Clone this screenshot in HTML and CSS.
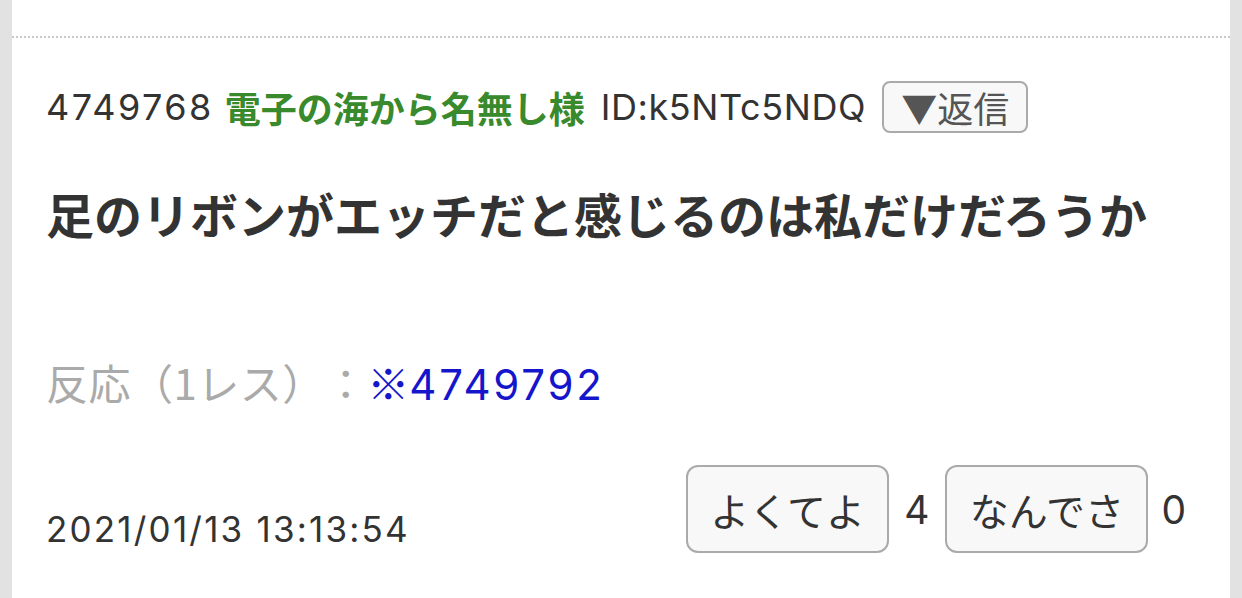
FILE: index.html
```html
<!DOCTYPE html>
<html lang="ja">
<head>
    <meta charset="UTF-8">
    <meta name="viewport" content="width=device-width, initial-scale=1.0">
    <title>4749768</title>
    <link rel="stylesheet" href="styles.css">
</head>
<body>
    <div class="thread">
        <div class="post">
            <div class="meta">
                <span class="num">4749768</span>
                <span class="name">電子の海から名無し様</span>
                <span class="uid">ID:k5NTc5NDQ</span>
                <button class="reply-button">▼返信</button>
            </div>

            <div class="body">足のリボンがエッチだと感じるのは私だけだろうか</div>

            <div class="reaction">
                <span class="label">反応（1レス）：</span><a class="res-link" href="#"><span class="mark">※</span>4749792</a>
            </div>

            <div class="footer">
                <div class="date">2021/01/13 13:13:54</div>
                <div class="votes">
                    <button class="vote-button">よくてよ</button>
                    <span class="count">4</span>
                    <button class="vote-button">なんでさ</button>
                    <span class="count last">0</span>
                </div>
            </div>
        </div>
    </div>
</body>
</html>
```

FILE: styles.css
```css
html, body {
    margin: 0;
    padding: 0;
}
body {
    font-family: "Inter", "Noto Sans CJK JP", sans-serif;
    background-color: #e2e2e2;
    color: #333;
    height: 598px;
    overflow: hidden;
    text-spacing-trim: space-all;
}
.thread {
    background-color: #fff;
    margin: 0 12px;
    padding-top: 36px;
    height: 598px;
    box-sizing: border-box;
}
.post {
    border-top: 2px dotted #c8c8c8;
    border-bottom: 1px dashed #cfcfcf;
    padding: 0 44px 45px 34px;
}
.meta {
    display: flex;
    align-items: center;
    height: 52px;
    margin-top: 43px;
    font-size: 36px;
}
.num {
    letter-spacing: 2.4px;
    margin-right: 11px;
}
.name {
    font-family: "Noto Sans CJK JP", sans-serif;
    font-weight: 700;
    color: #388a2c;
    margin-right: 16px;
}
.uid {
    letter-spacing: 0.6px;
    margin-right: 16px;
}
.reply-button {
    font-family: "Noto Sans CJK JP", sans-serif;
    font-size: 36px;
    color: #555;
    background-color: #f8f8f8;
    border: 2px solid #aaa;
    border-radius: 8px;
    height: 52px;
    padding: 0 17px;
    line-height: 1;
}
.body {
    margin-top: 44px;
    font-family: "Noto Sans CJK JP", sans-serif;
    font-size: 48px;
    font-weight: 700;
    line-height: 72px;
}
.reaction {
    margin-top: 103px;
    font-size: 42px;
    line-height: 60px;
}
.label {
    font-family: "Noto Sans CJK JP", sans-serif;
    color: #aaa;
    letter-spacing: 0.5px;
}
.res-link {
    color: #1515cc;
    text-decoration: none;
    letter-spacing: 2.8px;
}
.mark {
    font-family: "Noto Sans CJK JP", sans-serif;
    letter-spacing: 0;
}
.footer {
    display: flex;
    justify-content: space-between;
    align-items: flex-end;
    margin-top: 50px;
}
.date {
    font-size: 35px;
    letter-spacing: 2.2px;
    line-height: 40px;
    margin-bottom: 4px;
}
.votes {
    display: flex;
    align-items: center;
}
.vote-button {
    font-family: "Noto Sans CJK JP", sans-serif;
    font-size: 39px;
    color: #333;
    background-color: #f8f8f8;
    border: 2px solid #aaa;
    border-radius: 12px;
    width: 203px;
    height: 88px;
    padding: 0;
    line-height: 1;
}
.count {
    font-size: 39px;
    margin: 0 16px 0 15px;
}
.count.last {
    margin: 0 0 0 13px;
}
```
